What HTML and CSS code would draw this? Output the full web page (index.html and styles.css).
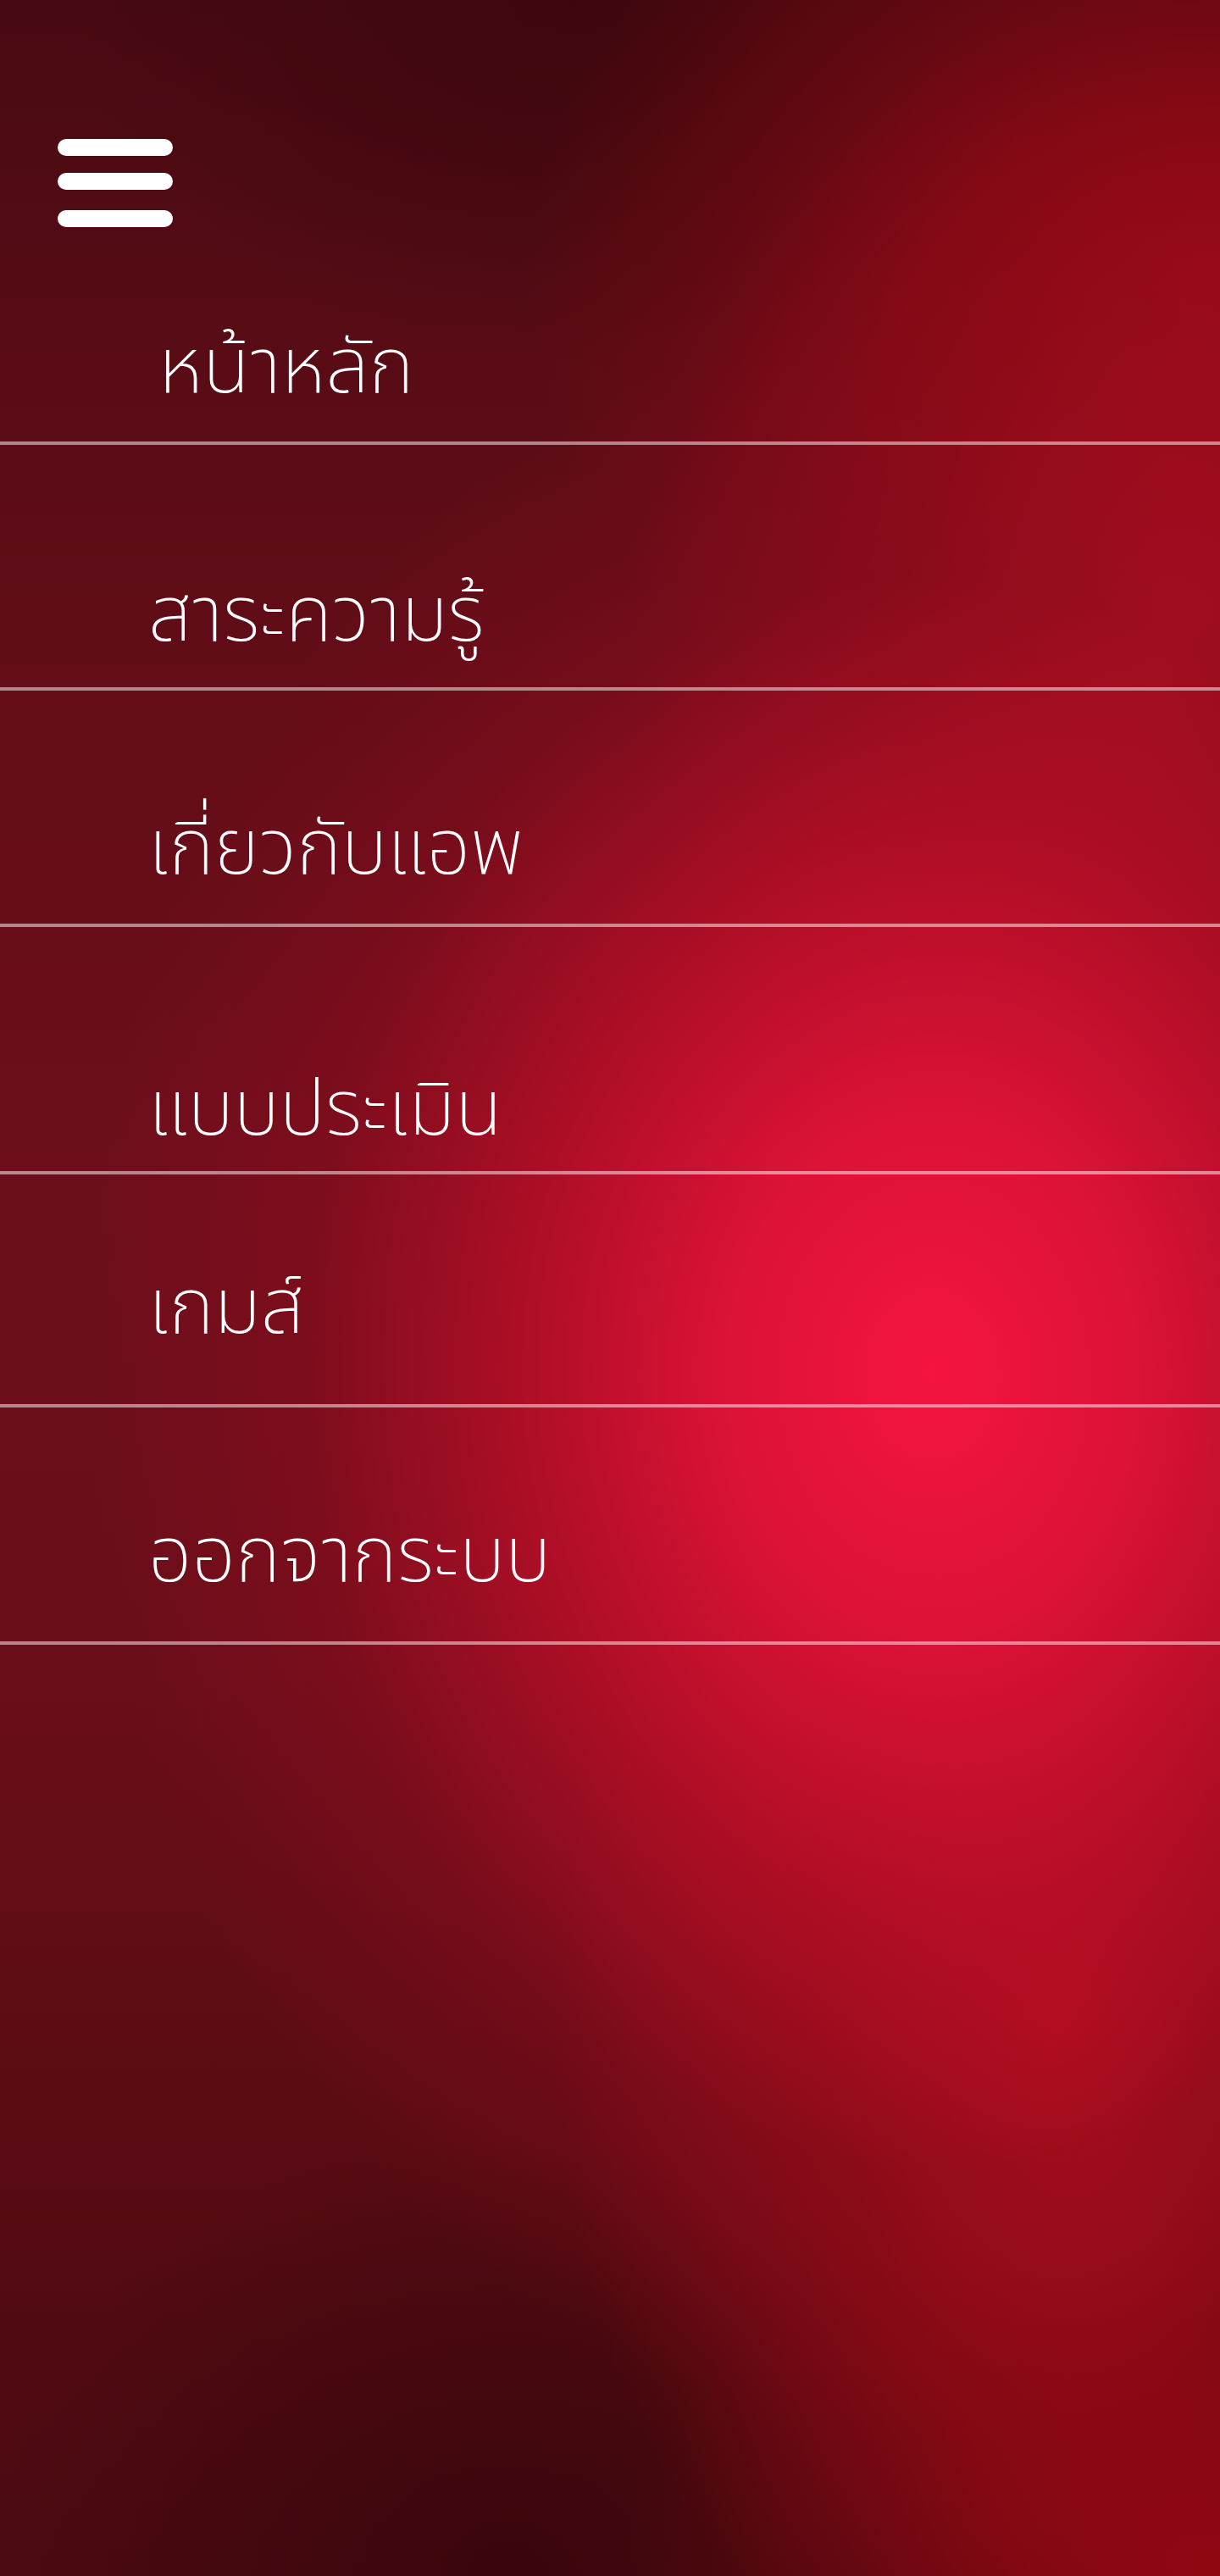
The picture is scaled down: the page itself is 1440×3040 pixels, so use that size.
FILE: index.html
```html
<!DOCTYPE html>
<html lang="th">
<head>
<meta charset="utf-8">
<title>เมนู</title>
<link rel="stylesheet" href="styles.css">
</head>
<body>
<div class="screen">
  <header class="topbar">
    <button class="hamburger" aria-label="เมนู">
      <span class="bar bar-1"></span>
      <span class="bar bar-2"></span>
      <span class="bar bar-3"></span>
    </button>
  </header>
  <nav class="menu">
    <a class="menu-item item-home" href="#"><span class="label">หน้าหลัก</span></a>
    <a class="menu-item item-knowledge" href="#"><span class="label">สาระความรู้</span></a>
    <a class="menu-item item-about" href="#"><span class="label">เกี่ยวกับแอพ</span></a>
    <a class="menu-item item-assess" href="#"><span class="label">แบบประเมิน</span></a>
    <a class="menu-item item-games" href="#"><span class="label">เกมส์</span></a>
    <a class="menu-item item-logout" href="#"><span class="label">ออกจากระบบ</span></a>
  </nav>
</div>
</body>
</html>
```
FILE: styles.css
```css
html, body {
  margin: 0;
  padding: 0;
}

body {
  background: #4a0a12;
  font-family: "Noto Sans Thai", "Noto Sans Thai UI", "Noto Sans", sans-serif;
}

.screen {
  width: 1440px;
  height: 3040px;
  overflow: hidden;
  background-color: #4a0a12;
  background-image:
    radial-gradient(ellipse 1000px 1250px at 1100px 1620px, rgba(244, 20, 63, 1) 0%, rgba(226, 18, 56, 0.95) 24%, rgba(186, 14, 40, 0.8) 50%, rgba(140, 12, 28, 0.45) 75%, rgba(110, 10, 24, 0) 100%),
    radial-gradient(ellipse 640px 760px at 1380px 760px, rgba(186, 14, 38, 0.85) 0%, rgba(160, 12, 30, 0.5) 50%, rgba(140, 10, 24, 0) 100%),
    radial-gradient(ellipse 600px 860px at 1250px 2380px, rgba(196, 14, 28, 1) 0%, rgba(170, 10, 22, 0.55) 50%, rgba(140, 8, 18, 0) 100%),
    radial-gradient(ellipse 820px 640px at 1440px 330px, rgba(148, 8, 18, 1) 0%, rgba(132, 8, 18, 0.65) 50%, rgba(110, 6, 14, 0) 100%),
    radial-gradient(ellipse 700px 500px at 1440px 3040px, rgba(140, 6, 16, 1) 0%, rgba(120, 6, 16, 0.4) 60%, rgba(100, 6, 14, 0) 100%),
    radial-gradient(ellipse 620px 520px at 600px 3040px, rgba(58, 6, 11, 1) 0%, rgba(58, 6, 11, 0) 100%),
    radial-gradient(ellipse 600px 420px at 680px 0px, rgba(60, 6, 12, 0.9) 0%, rgba(60, 6, 12, 0) 100%),
    linear-gradient(180deg, #470a12 0%, #5a0c16 15%, #6e0e1c 45%, #6a0e1a 65%, #520a12 90%, #4c0a12 100%);
}

.topbar {
  padding: 164px 0 0 68px;
  height: 104px;
  box-sizing: content-box;
}

.hamburger {
  display: flex;
  flex-direction: column;
  width: 136px;
  padding: 0;
  margin: 0;
  border: 0;
  background: transparent;
  cursor: pointer;
}

.bar {
  display: block;
  width: 136px;
  height: 20px;
  border-radius: 10px;
  background: #ffffff;
}

.bar-2 {
  margin-top: 20px;
}

.bar-3 {
  margin-top: 24px;
}

.menu {
  display: flex;
  flex-direction: column;
}

.menu-item {
  display: flex;
  align-items: flex-end;
  box-sizing: border-box;
  padding-left: 175px;
  border-bottom: 4px solid rgba(255, 255, 255, 0.5);
  color: #ffffff;
  text-decoration: none;
}

.label {
  font-size: 91px;
  font-weight: 250;
  line-height: 1;
  white-space: nowrap;
}

.item-home {
  height: 257px;
  padding-left: 187px;
  padding-bottom: 40px;
}

.item-knowledge {
  height: 290px;
  padding-bottom: 37px;
}

.item-about {
  height: 279px;
  padding-bottom: 41px;
}

.item-assess {
  height: 292px;
  padding-bottom: 25px;
}

.item-games {
  height: 275px;
  padding-bottom: 66px;
}

.item-logout {
  height: 280px;
  padding-bottom: 53px;
}
```
